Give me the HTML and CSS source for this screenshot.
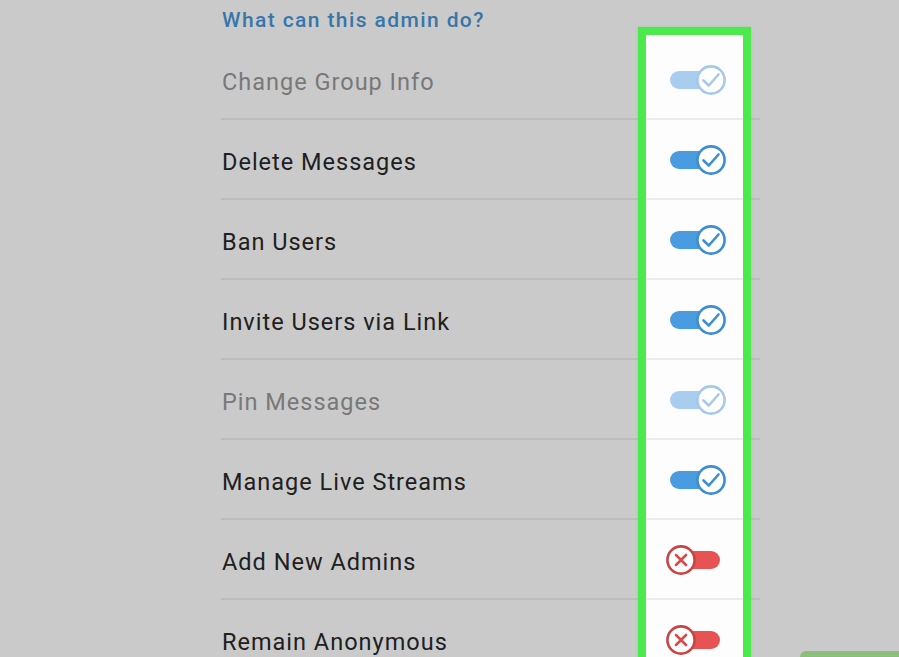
FILE: index.html
```html
<!DOCTYPE html>
<html lang="en">
<head>
<meta charset="utf-8">
<title>Admin rights</title>
<link rel="stylesheet" href="styles.css">
</head>
<body>
<div class="page">
  <div class="highlight-fill"></div>
  <div class="highlight-frame"></div>
  <section class="rights">
    <h2 class="header">What can this admin do?</h2>
    <div class="row"><span class="label disabled">Change Group Info</span>
      <span class="toggle on dim"><span class="track"></span><svg class="knob" viewBox="0 0 30 30"><circle cx="15" cy="15" r="13.6"/><polyline points="7.5,15.5 12.8,20.5 22.5,9.5"/></svg></span></div>
    <div class="row"><span class="label">Delete Messages</span>
      <span class="toggle on"><span class="track"></span><svg class="knob" viewBox="0 0 30 30"><circle cx="15" cy="15" r="13.6"/><polyline points="7.5,15.5 12.8,20.5 22.5,9.5"/></svg></span></div>
    <div class="row"><span class="label">Ban Users</span>
      <span class="toggle on"><span class="track"></span><svg class="knob" viewBox="0 0 30 30"><circle cx="15" cy="15" r="13.6"/><polyline points="7.5,15.5 12.8,20.5 22.5,9.5"/></svg></span></div>
    <div class="row"><span class="label">Invite Users via Link</span>
      <span class="toggle on"><span class="track"></span><svg class="knob" viewBox="0 0 30 30"><circle cx="15" cy="15" r="13.6"/><polyline points="7.5,15.5 12.8,20.5 22.5,9.5"/></svg></span></div>
    <div class="row"><span class="label disabled">Pin Messages</span>
      <span class="toggle on dim"><span class="track"></span><svg class="knob" viewBox="0 0 30 30"><circle cx="15" cy="15" r="13.6"/><polyline points="7.5,15.5 12.8,20.5 22.5,9.5"/></svg></span></div>
    <div class="row"><span class="label">Manage Live Streams</span>
      <span class="toggle on"><span class="track"></span><svg class="knob" viewBox="0 0 30 30"><circle cx="15" cy="15" r="13.6"/><polyline points="7.5,15.5 12.8,20.5 22.5,9.5"/></svg></span></div>
    <div class="row"><span class="label">Add New Admins</span>
      <span class="toggle off"><span class="track"></span><svg class="knob" viewBox="0 0 30 30"><circle cx="15" cy="15" r="13.6"/><path d="M10 10 L20 20 M20 10 L10 20"/></svg></span></div>
    <div class="row"><span class="label">Remain Anonymous</span>
      <span class="toggle off"><span class="track"></span><svg class="knob" viewBox="0 0 30 30"><circle cx="15" cy="15" r="13.6"/><path d="M10 10 L20 20 M20 10 L10 20"/></svg></span></div>
  </section>
  <div class="corner-button"></div>
</div>
</body>
</html>
```
FILE: styles.css
```css
html, body {
  margin: 0;
  padding: 0;
  height: 657px;
  overflow: hidden;
  background: #cacaca;
}

.page {
  position: relative;
  width: 899px;
  height: 657px;
  overflow: hidden;
  font-family: Roboto, "Liberation Sans", sans-serif;
}

.rights {
  position: relative;
  z-index: 1;
  margin-left: 221px;
  width: 539px;
}

.header {
  margin: 0;
  height: 40px;
  line-height: 40px;
  padding-left: 1px;
  font-size: 21px;
  font-weight: 500;
  letter-spacing: 1.4px;
  color: #3776a9;
}

.row {
  box-sizing: border-box;
  height: 80px;
  border-bottom: 2px solid rgba(0, 0, 0, 0.065);
  display: flex;
  align-items: center;
}

.label {
  flex: 1;
  padding-left: 1px;
  padding-top: 5px;
  font-size: 23.5px;
  letter-spacing: 1px;
  color: #202020;
}

.label.disabled {
  color: #787878;
}

.toggle {
  position: relative;
  width: 60px;
  height: 30px;
  margin-right: 34px;
  margin-top: 2px;
}

.track {
  position: absolute;
  top: 6px;
  height: 18px;
  border-radius: 9px;
}

.knob {
  position: absolute;
  top: 0;
  width: 30px;
  height: 30px;
  fill: #ffffff;
  stroke-width: 2.6;
  stroke-linecap: round;
  stroke-linejoin: round;
}

.knob polyline,
.knob path {
  fill: none;
}

.toggle.on .track {
  left: 4px;
  width: 44px;
  background: #4a9ce0;
}

.toggle.on .knob {
  right: 0;
  stroke: #3d8dd2;
}

.toggle.on.dim .track {
  background: #a9cdee;
}

.toggle.on.dim .knob {
  stroke: #a5c9ea;
}

.toggle.off .track {
  right: 6px;
  width: 40px;
  background: #e75252;
}

.toggle.off .knob {
  left: 0;
  stroke: #c94444;
}

.toggle.off .knob path {
  stroke: #d64a4a;
}

.highlight-fill {
  position: absolute;
  left: 646px;
  top: 35px;
  width: 97px;
  height: 700px;
  background: #fdfdfd;
  z-index: 0;
}

.highlight-frame {
  position: absolute;
  left: 638px;
  top: 27px;
  width: 97px;
  height: 700px;
  border: 8px solid #4ce94c;
  box-shadow: 0 0 2px rgba(76, 233, 76, 0.6);
  z-index: 2;
}

.corner-button {
  position: absolute;
  left: 800px;
  top: 651px;
  width: 120px;
  height: 30px;
  background: #8dbd7a;
  border-top-left-radius: 6px;
  z-index: 2;
}
```
